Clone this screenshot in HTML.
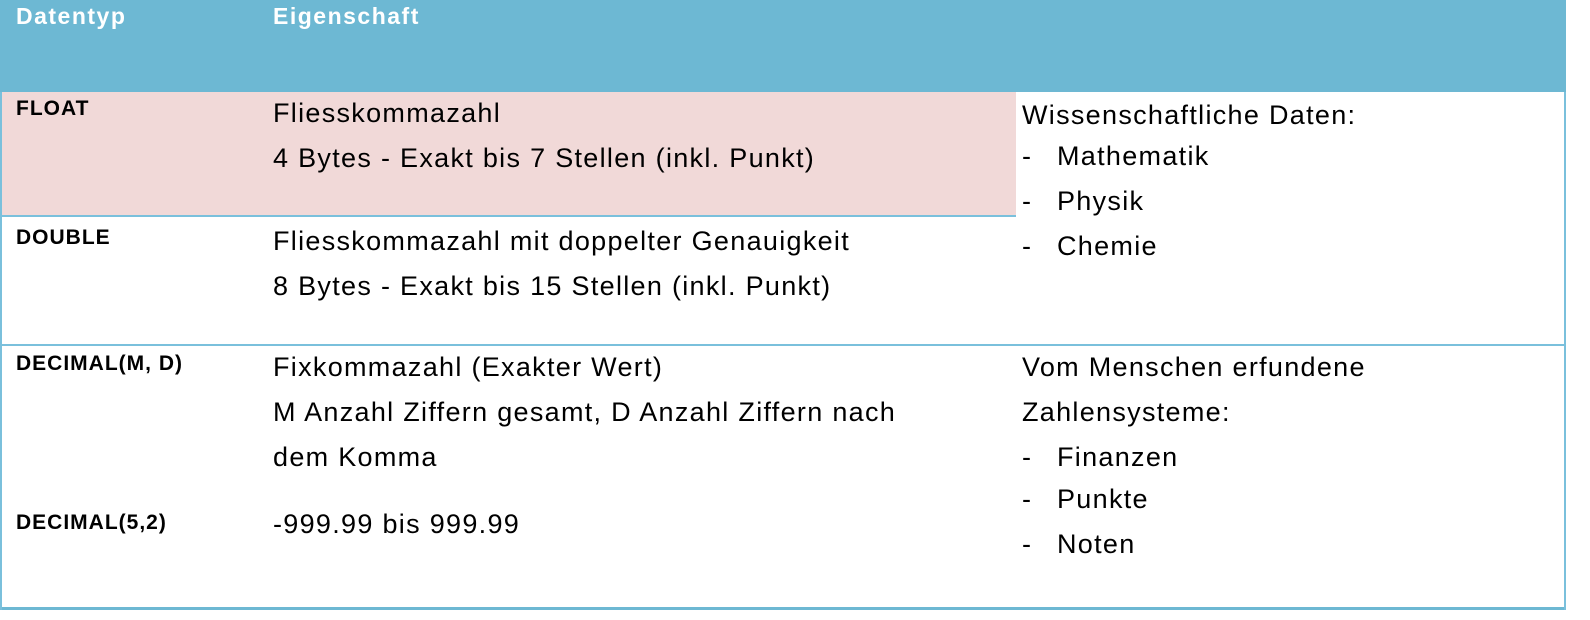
<!DOCTYPE html>
<html><head><meta charset="utf-8"><style>
body{margin:0;width:1590px;height:620px;background:#fff;position:relative;overflow:hidden;font-family:"Liberation Sans",Arial,sans-serif;color:#000}
div{position:absolute;white-space:nowrap}
.h{color:#fff;font-weight:bold;font-size:23px;letter-spacing:1.5px;top:3px}
.b{font-weight:bold;font-size:21px;letter-spacing:1px;left:16px}
.t{font-size:27px;line-height:45px;letter-spacing:1.3px}
</style></head><body>
<div style="left:0;top:0;width:1566px;height:92px;background:#6db8d3"></div>
<div style="left:0;top:92px;width:1016px;height:124px;background:#f1d9d8"></div>
<div style="left:0;top:215px;width:1016px;height:2px;background:#7ac0dc"></div>
<div style="left:0;top:344px;width:1566px;height:2px;background:#7ac0dc"></div>
<div style="left:0;top:607px;width:1566px;height:3px;background:#6db8d3"></div>
<div style="left:0;top:92px;width:2px;height:518px;background:#7ac0dc"></div>
<div style="left:1564px;top:92px;width:2px;height:518px;background:#7ac0dc"></div>
<div class="h" style="left:16px">Datentyp</div>
<div class="h" style="left:273px">Eigenschaft</div>
<div class="b" style="top:97px">FLOAT</div>
<div class="t" style="left:273px;top:91px">Fliesskommazahl<br>4 Bytes - Exakt bis 7 Stellen (inkl. Punkt)</div>
<div class="b" style="top:226px">DOUBLE</div>
<div class="t" style="left:273px;top:219px">Fliesskommazahl mit doppelter Genauigkeit<br>8 Bytes - Exakt bis 15 Stellen (inkl. Punkt)</div>
<div class="b" style="top:352px">DECIMAL(M, D)</div>
<div class="t" style="left:273px;top:345px">Fixkommazahl (Exakter Wert)<br>M Anzahl Ziffern gesamt, D Anzahl Ziffern nach<br>dem Komma</div>
<div class="b" style="top:511px">DECIMAL(5,2)</div>
<div class="t" style="left:273px;top:502px">-999.99 bis 999.99</div>
<div class="t" style="left:1022px;top:93px">Wissenschaftliche Daten:</div>
<div class="t" style="left:1022px;top:134px">-</div><div class="t" style="left:1057px;top:134px">Mathematik</div>
<div class="t" style="left:1022px;top:179px">-</div><div class="t" style="left:1057px;top:179px">Physik</div>
<div class="t" style="left:1022px;top:224px">-</div><div class="t" style="left:1057px;top:224px">Chemie</div>
<div class="t" style="left:1022px;top:345px">Vom Menschen erfundene<br>Zahlensysteme:</div>
<div class="t" style="left:1022px;top:435px">-</div><div class="t" style="left:1057px;top:435px">Finanzen</div>
<div class="t" style="left:1022px;top:477px">-</div><div class="t" style="left:1057px;top:477px">Punkte</div>
<div class="t" style="left:1022px;top:522px">-</div><div class="t" style="left:1057px;top:522px">Noten</div>
</body></html>
